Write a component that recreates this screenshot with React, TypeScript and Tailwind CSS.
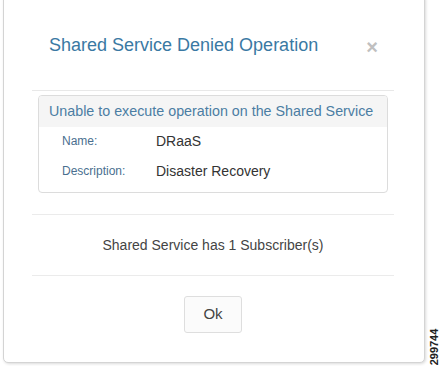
import React from "react";

export default function App() {
  return (
    <div
      className="w-[442px] h-[366px] bg-white relative overflow-hidden"
      style={{ fontFamily: '"Liberation Sans", Arial, sans-serif' }}
    >
      <div className="absolute left-[3px] top-[-6px] w-[422px] h-[369px] bg-white border border-[#d4d4d4] rounded-[5px] shadow-[1px_1px_3px_rgba(0,0,0,0.15)]">
        <div className="pl-[28px] pr-[30px]">
          <div className="relative h-[96px] border-b border-[#e8e8e8]">
            <div className="absolute left-[17px] top-[40px] text-[18px] leading-[20px] text-[#3a79a3] whitespace-nowrap">
              Shared Service Denied Operation
            </div>
            <div className="absolute right-[16px] top-[42px] text-[20px] leading-[20px] text-[#c0c0c0] font-bold">
              ×
            </div>
          </div>
          <div className="mx-[6px] mt-[4px] border border-[#dcdcdc] rounded-[4px] overflow-hidden">
            <div className="h-[31px] bg-[#f5f5f5] pl-[10px] pt-[6px] text-[14.3px] leading-[18px] text-[#4b7da3] whitespace-nowrap">
              Unable to execute operation on the Shared Service
            </div>
            <div className="pl-[23px] pt-[6px] pb-[13px] flex flex-col gap-[14px]">
              <div className="flex items-center h-[16px]">
                <div className="w-[94px] text-[12px] text-[#4a6f8f]">Name:</div>
                <div className="text-[14px] text-[#333]">DRaaS</div>
              </div>
              <div className="flex items-center h-[16px]">
                <div className="w-[94px] text-[12px] text-[#4a6f8f]">Description:</div>
                <div className="text-[14px] text-[#333]">Disaster Recovery</div>
              </div>
            </div>
          </div>
          <div className="mt-[21px] border-t border-[#ebebeb] h-[61px] flex items-center justify-center text-[14px] text-[#444]">
            Shared Service has 1 Subscriber(s)
          </div>
          <div className="border-t border-[#ebebeb] flex justify-center pt-[20px]">
            <button className="w-[58px] h-[37px] border border-[#dedede] rounded-[3px] bg-[#fbfbfb] text-[15px] text-[#444]">
              Ok
            </button>
          </div>
        </div>
      </div>
      <div className="absolute left-[427px] top-[331px] w-[14px] h-[32px] flex items-center justify-center">
        <div className="-rotate-90 text-[11px] leading-[12px] text-[#222] font-bold whitespace-nowrap">
          299744
        </div>
      </div>
    </div>
  );
}
